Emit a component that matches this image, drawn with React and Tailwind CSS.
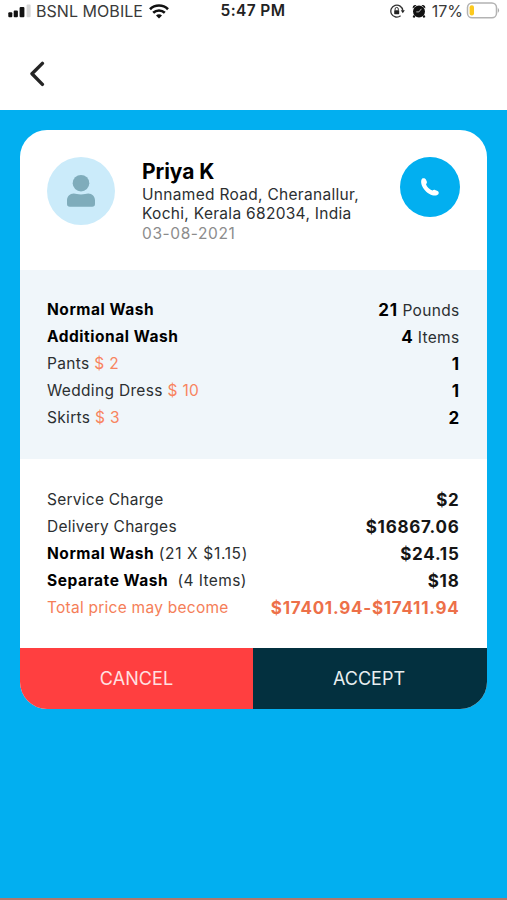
const items = [
  { name: "Pants", price: "$ 2", count: 1 },
  { name: "Wedding Dress", price: "$ 10", count: 1 },
  { name: "Skirts", price: "$ 3", count: 2 },
];

function StatusBar() {
  return (
    <div className="flex h-[22px] items-center justify-between pl-2 pr-[7px] text-[#3a3a3a]">
      <div className="flex w-[212px] items-center">
        <svg width="23" height="14" viewBox="0 0 23 14" className="shrink-0">
          <rect x="0.3" y="8.2" width="4" height="5" rx="1" fill="#111" />
          <rect x="5.7" y="6.4" width="4.2" height="6.8" rx="1" fill="#111" />
          <rect x="11.6" y="3" width="4.8" height="10.2" rx="1" fill="#111" />
          <rect x="18.6" y="0.5" width="4" height="12.7" rx="1" fill="#d6d6d6" />
        </svg>
        <span className="ml-[5px] whitespace-nowrap text-[16px] tracking-[0.05px]">BSNL MOBILE</span>
        <svg width="20" height="15" viewBox="0 0 20 15" className="ml-[6px] shrink-0" fill="none" stroke="#111" strokeWidth="2.6">
          <path d="M1 5.2C6 .3 14 .3 19 5.2" />
          <path d="M4.2 8.8C7.5 5.7 12.5 5.7 15.8 8.8" />
          <path d="M7 11.4C8.8 9.8 11.2 9.8 13 11.4L10 14.4Z" fill="#111" stroke="none" />
        </svg>
      </div>
      <span className="mr-[2px] text-[15.5px] font-semibold tracking-[0.4px] text-[#222]">5:47 PM</span>
      <div className="flex w-[212px] items-center justify-end">
        <svg width="15" height="14" viewBox="0 0 15 14" fill="none" stroke="#333" strokeWidth="1.3">
          <path d="M10.6 11.8A6 6 0 1 1 12.8 6.5" />
          <path d="M10.8 6.3h4l-2 3z" fill="#222" stroke="none" />
          <rect x="4.2" y="6.2" width="5" height="4" rx="0.6" fill="#222" stroke="none" />
          <path d="M5.1 6.5V5a1.6 1.6 0 0 1 3.2 0v1.5" strokeWidth="1" />
        </svg>
        <svg width="14" height="15" viewBox="0 0 14 15" className="ml-[7px]">
          <circle cx="7" cy="7.6" r="6" fill="#111" />
          <path d="M.8 4.6C.2 2 2 .4 4.6 1.1zM13.2 4.6C13.8 2 12 .4 9.4 1.1z" fill="#111" />
          <path d="M2.5 11.5l-1 2M11.5 11.5l1 2" stroke="#111" strokeWidth="2" />
          <path d="M9.4 4.8L6.9 7.9H4.3" fill="none" stroke="#bbb" strokeWidth="1" />
        </svg>
        <span className="ml-[6px] text-[16px]">17%</span>
        <svg width="34" height="17" viewBox="0 0 34 17" className="-mt-[2px] ml-[3px]">
          <rect x="1.5" y="1" width="29" height="14.8" rx="4.6" fill="#fff" stroke="#b3b3b3" strokeWidth="1.5" />
          <rect x="3.6" y="3.2" width="4.4" height="10.4" rx="2" fill="#fcc91e" />
          <path d="M31.8 5.7q2.6 2.7 0 5.4z" fill="#aaa" />
        </svg>
      </div>
    </div>
  );
}

function Row({ children, value, valueClass = "" }) {
  return (
    <div className="flex h-[27px] items-center justify-between whitespace-nowrap">
      <div>{children}</div>
      <div className={`relative top-px ${valueClass}`}>{value}</div>
    </div>
  );
}

function App() {
  const label = "font-bold tracking-[0.53px] text-black";
  const amount = "text-[17px] font-bold tracking-[0.75px] text-[#151515]";

  return (
    <div className="flex h-[900px] w-[507px] flex-col overflow-hidden bg-[#02aff0] font-['Inter',sans-serif] text-[15.5px] text-[#2c2f31]">
      <header className="h-[110px] shrink-0 bg-white">
        <StatusBar />
        <button className="ml-[29px] mt-[39px] block">
          <svg width="16" height="26" viewBox="0 0 16 26" fill="none" stroke="#252525" strokeWidth="3.4" strokeLinecap="round" strokeLinejoin="round">
            <path d="M13.4 2.4L3 12.8L13.4 23.4" />
          </svg>
        </button>
      </header>

      <main className="mx-5 mt-[20.4px] overflow-hidden rounded-[27px] bg-white">
        {/* Customer */}
        <section className="flex h-[139.6px] items-start px-[27px] pt-[27px]">
          <div className="flex h-[68px] w-[68px] shrink-0 items-center justify-center rounded-full bg-[#cbebfa]">
            <svg width="30" height="34" viewBox="0 0 30 34" fill="#7facbb">
              <circle cx="15" cy="9.2" r="8.3" />
              <path d="M1 30v-3.5C1 22.5 3.8 19.5 7.8 19.5c2 0 4 1 7.200 1S20.200 19.500 22.200 19.500C26.200 19.500 29 22.500 29 26.500V30c0 1.800-1 2.800-2.800 2.800H3.800C2 32.800 1 31.800 1 30z" />
            </svg>
          </div>
          <div className="ml-[27px] flex-1 whitespace-nowrap pt-[0.5px] leading-[19.5px] tracking-[0.3px]">
            <h1 className="text-[21px] font-bold leading-[27px] tracking-[-0.05px] text-black">Priya K</h1>
            <p>Unnamed Road, Cheranallur,</p>
            <p>Kochi, Kerala 682034, India</p>
            <p className="tracking-[0.6px] text-[#8c8c8c]">03-08-2021</p>
          </div>
          <button className="flex h-[60px] w-[60px] shrink-0 items-center justify-center rounded-full bg-[#02aff0]">
            <svg width="18" height="18" viewBox="0 0 18 18" fill="white">
              <path d="M1 .7C2.3-.2 4.2.2 4.9 1.6L5.8 3.5C6.2 4.5 5.8 5.5 5 6.2C5.8 9 8.5 11.6 11.5 12.5C12.2 11.7 13.1 11.5 14.1 11.9L16.6 13C17.8 13.6 18.1 15.1 17.3 16.2C15.8 18 12.2 18.2 8.5 16C3.8 13.2.6 8.7.2 4.7C0 2.9.2 1.5 1 .7Z" />
            </svg>
          </button>
        </section>

        {/* Ordered items */}
        <section className="h-[189px] bg-[#f0f6fa] pl-[27px] pr-[27.5px] pt-[26.4px] tracking-[0.33px]">
          <Row value={<><b className="text-[17px] tracking-[0.7px] text-black">21</b> Pounds</>}>
            <span className={label}>Normal Wash</span>
          </Row>
          <Row value={<><b className="text-[17px] text-black">4</b> Items</>}>
            <span className={label}>Additional Wash</span>
          </Row>
          {items.map((item) => (
            <Row key={item.name} value={item.count} valueClass="text-[17px] font-bold text-black">
              {item.name} <span className="text-[#f8845f]">{item.price}</span>
            </Row>
          ))}
        </section>

        {/* Charges */}
        <section className="h-[189.3px] pl-[27px] pr-[27.5px] pt-[27px] tracking-[0.25px]">
          <Row value="$2" valueClass={amount}>Service Charge</Row>
          <Row value="$16867.06" valueClass={amount}>Delivery Charges</Row>
          <Row value="$24.15" valueClass={amount}>
            <span className={label}>Normal Wash</span>{" "}
            <span className="tracking-[0.65px]">(21 X $1.15)</span>
          </Row>
          <Row value="$18" valueClass={amount}>
            <span className={label}>Separate Wash</span>&nbsp;{" "}
            <span className="tracking-[0.4px]">(4 Items)</span>
          </Row>
          <Row value="$17401.94-$17411.94" valueClass="text-[17px] font-bold tracking-[0.75px] text-[#ed7049]">
            <span className="text-[#f57e58]">Total price may become</span>
          </Row>
        </section>

        <div className="grid h-[61px] grid-cols-[233px_234px] text-[18px] text-[#e8eef0]">
          <button className="bg-[#ff3f40] tracking-[0.1px] text-[#ffe0e0]">CANCEL</button>
          <button className="bg-[#03303f] pr-[2px]">ACCEPT</button>
        </div>
      </main>

      <div className="mt-auto h-[2px] bg-[#b1786c]" />
    </div>
  );
}

export default App;
